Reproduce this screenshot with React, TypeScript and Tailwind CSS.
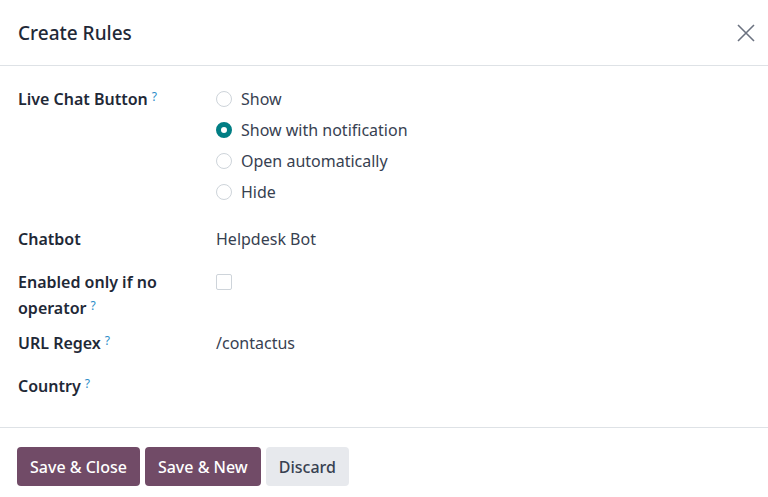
import React, { useState } from "react";

const FONT = { fontFamily: '"Noto Sans", "Open Sans", sans-serif' };

const Help = () => (
  <sup className="ml-[4px] text-[12px] font-normal text-[#2b8dc8] relative -top-[4px]">?</sup>
);

const options = ["Show", "Show with notification", "Open automatically", "Hide"];

const Row = ({
  label,
  help,
  children,
  className = "",
}: {
  label: React.ReactNode;
  help?: boolean;
  children?: React.ReactNode;
  className?: string;
}) => (
  <div className={`grid grid-cols-[198px_1fr] mb-[9px] ${className}`}>
    <div className="min-h-[34px] pr-6 font-semibold text-[#1f2937] leading-[26px]">
      {label}
      {help && <Help />}
    </div>
    <div className="min-h-[34px] leading-[26px] text-[#374151]">{children}</div>
  </div>
);

export default function App() {
  const [choice, setChoice] = useState("Show with notification");
  const [noOperator, setNoOperator] = useState(false);

  return (
    <div className="w-[768px] h-[497px] bg-white flex flex-col text-[16px]" style={FONT}>
      {/* header */}
      <div className="h-[66px] flex items-center justify-between pl-[18px] pr-[8px] border-b border-[#dee2e6] shrink-0">
        <h1 className="text-[19px] font-medium text-[#1f2937] pt-[2px]">Create Rules</h1>
        <button className="p-1 text-[#6b7280]" aria-label="Close">
          <svg width="20" height="20" viewBox="0 0 20 20" fill="none" stroke="currentColor" strokeWidth="1.6">
            <path d="M2 2 L18 18 M18 2 L2 18" />
          </svg>
        </button>
      </div>

      {/* body */}
      <div className="flex-1 pt-[20px] pl-[18px]">
        <Row label="Live Chat Button" help className="mb-[16px]">
          <div className="flex flex-col">
            {options.map((o) => {
              const on = o === choice;
              return (
                <label
                  key={o}
                  className="h-[31px] flex items-start gap-[9px] cursor-pointer"
                  onClick={() => setChoice(o)}
                >
                  <span
                    className={`mt-[5px] w-4 h-4 rounded-full shrink-0 bg-white ${
                      on ? "border-[5px] border-[#017e84]" : "border border-[#ced4da]"
                    }`}
                  />
                  <span className="leading-[26px] text-[#374151]">{o}</span>
                </label>
              );
            })}
          </div>
        </Row>

        <Row label="Chatbot">Helpdesk Bot</Row>

        <Row
          label={
            <>
              Enabled only if no
              <br />
              operator
              <Help />
            </>
          }
        >
          <button
            onClick={() => setNoOperator(!noOperator)}
            className="mt-[5px] block w-4 h-4 border border-[#ced4da] rounded-[2px] bg-white"
            aria-label="Enabled only if no operator"
          />
        </Row>

        <Row label="URL Regex" help>
          /contactus
        </Row>

        <Row label="Country" help />
      </div>

      {/* footer */}
      <div className="h-[70px] border-t border-[#dee2e6] pt-[19px] pl-[17px] flex gap-[5px] items-start shrink-0">
        <button className="h-[39px] px-[13px] rounded-[4px] bg-[#714b67] text-white font-medium">
          Save &amp; Close
        </button>
        <button className="h-[39px] px-[13px] rounded-[4px] bg-[#714b67] text-white font-medium">
          Save &amp; New
        </button>
        <button className="h-[39px] px-[13px] rounded-[4px] bg-[#e7e9ed] text-[#374151] font-medium">
          Discard
        </button>
      </div>
    </div>
  );
}
